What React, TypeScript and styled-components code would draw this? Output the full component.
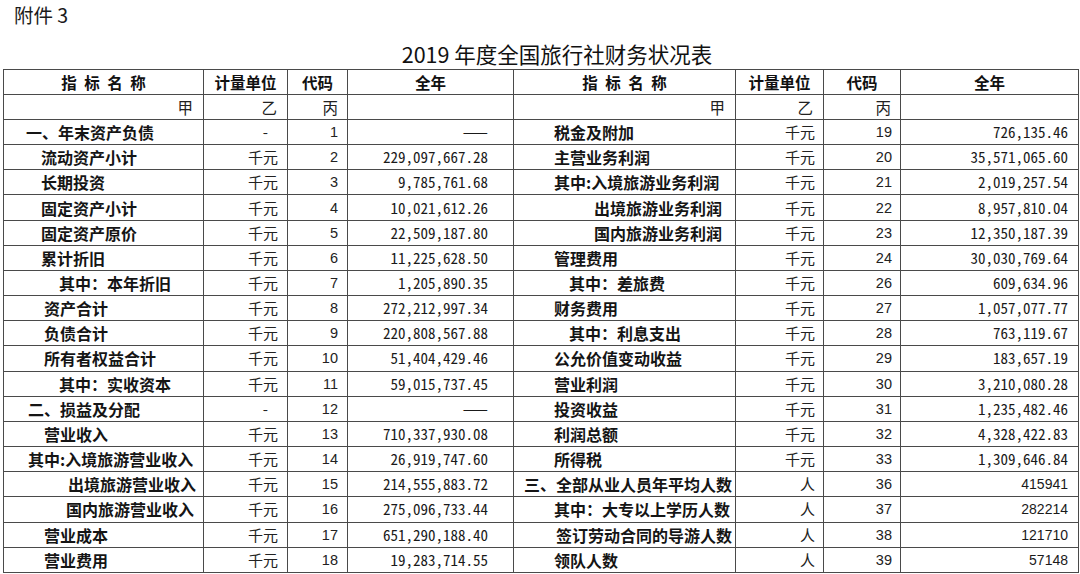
import React from "react";
import styled, { createGlobalStyle } from "styled-components";

const Global = createGlobalStyle`
  html, body { margin: 0; padding: 0; background: #fff; }
  body { font-family: "Noto Sans CJK SC", "Noto Sans", sans-serif; color: #111; }
`;

const Page = styled.div`
  width: 1080px;
  height: 574px;
  overflow: hidden;
  background: #fff;
`;

const Note = styled.div`
  height: 30px;
  line-height: 30px;
  padding-left: 14px;
  font-size: 19.5px;
  font-weight: 400;
  color: #1a1a1a;
`;

const Title = styled.div`
  height: 30px;
  line-height: 30px;
  padding-top: 9px;
  padding-left: 34px;
  text-align: center;
  font-size: 21.5px;
  font-weight: 400;
  color: #111;
`;

const Table = styled.table`
  margin-left: 3px;
  width: 1075px;
  border-collapse: collapse;
  table-layout: fixed;
`;

const Row = styled.tr<{ $h: number }>`
  height: ${(p) => p.$h}px;
`;

const Cell = styled.td<{ $align?: string; $pl?: number; $pr?: number }>`
  border: 1px solid #4a4a4a;
  padding: 0 ${(p) => p.$pr ?? 0}px 0 ${(p) => p.$pl ?? 0}px;
  text-align: ${(p) => p.$align ?? "left"};
  white-space: nowrap;
  overflow: hidden;
  line-height: 20px;
  vertical-align: middle;
`;

const HeadCell = styled(Cell)`
  text-align: center;
  font-size: 15.5px;
  font-weight: 700;
  color: #111;
`;

const Spaced = styled.span`
  word-spacing: 4px;
`;

const MarkCell = styled(Cell)`
  text-align: right;
  font-size: 15.5px;
  font-weight: 400;
  color: #222;
`;

const LabelCell = styled(Cell)`
  font-size: 16px;
  font-weight: 700;
  color: #151515;
`;

const UnitCell = styled(Cell)`
  text-align: right;
  font-size: 15px;
  font-weight: 400;
  color: #222;
`;

const CodeCell = styled(Cell)`
  text-align: right;
  font-family: "Liberation Sans", Arial, sans-serif;
  font-size: 14.5px;
  color: #222;
`;

const NumCell = styled(Cell)`
  text-align: right;
  font-size: 15px;
  font-feature-settings: "hwid" 1;
  color: #1a1a1a;
`;

const CountCell = styled(Cell)`
  text-align: right;
  font-family: "Liberation Sans", Arial, sans-serif;
  font-size: 14px;
  color: #1a1a1a;
`;

type Item = { label: string; indent: number; unit: string; code: string; value: string; count?: boolean };

const left: Item[] = [
  { label: "一、年末资产负债", indent: 22, unit: "-", code: "1", value: "——" },
  { label: "流动资产小计", indent: 37, unit: "千元", code: "2", value: "229,097,667.28" },
  { label: "长期投资", indent: 37, unit: "千元", code: "3", value: "9,785,761.68" },
  { label: "固定资产小计", indent: 37, unit: "千元", code: "4", value: "10,021,612.26" },
  { label: "固定资产原价", indent: 37, unit: "千元", code: "5", value: "22,509,187.80" },
  { label: "累计折旧", indent: 37, unit: "千元", code: "6", value: "11,225,628.50" },
  { label: "其中：本年折旧", indent: 55, unit: "千元", code: "7", value: "1,205,890.35" },
  { label: "资产合计", indent: 40, unit: "千元", code: "8", value: "272,212,997.34" },
  { label: "负债合计", indent: 40, unit: "千元", code: "9", value: "220,808,567.88" },
  { label: "所有者权益合计", indent: 40, unit: "千元", code: "10", value: "51,404,429.46" },
  { label: "其中：实收资本", indent: 55, unit: "千元", code: "11", value: "59,015,737.45" },
  { label: "二、损益及分配", indent: 24, unit: "-", code: "12", value: "——" },
  { label: "营业收入", indent: 40, unit: "千元", code: "13", value: "710,337,930.08" },
  { label: "其中:入境旅游营业收入", indent: 24, unit: "千元", code: "14", value: "26,919,747.60" },
  { label: "出境旅游营业收入", indent: 64, unit: "千元", code: "15", value: "214,555,883.72" },
  { label: "国内旅游营业收入", indent: 62, unit: "千元", code: "16", value: "275,096,733.44" },
  { label: "营业成本", indent: 40, unit: "千元", code: "17", value: "651,290,188.40" },
  { label: "营业费用", indent: 40, unit: "千元", code: "18", value: "19,283,714.55" },
];

const right: Item[] = [
  { label: "税金及附加", indent: 40, unit: "千元", code: "19", value: "726,135.46" },
  { label: "主营业务利润", indent: 40, unit: "千元", code: "20", value: "35,571,065.60" },
  { label: "其中:入境旅游业务利润", indent: 40, unit: "千元", code: "21", value: "2,019,257.54" },
  { label: "出境旅游业务利润", indent: 80, unit: "千元", code: "22", value: "8,957,810.04" },
  { label: "国内旅游业务利润", indent: 80, unit: "千元", code: "23", value: "12,350,187.39" },
  { label: "管理费用", indent: 40, unit: "千元", code: "24", value: "30,030,769.64" },
  { label: "其中：差旅费", indent: 55, unit: "千元", code: "26", value: "609,634.96" },
  { label: "财务费用", indent: 40, unit: "千元", code: "27", value: "1,057,077.77" },
  { label: "其中：利息支出", indent: 55, unit: "千元", code: "28", value: "763,119.67" },
  { label: "公允价值变动收益", indent: 40, unit: "千元", code: "29", value: "183,657.19" },
  { label: "营业利润", indent: 40, unit: "千元", code: "30", value: "3,210,080.28" },
  { label: "投资收益", indent: 40, unit: "千元", code: "31", value: "1,235,482.46" },
  { label: "利润总额", indent: 40, unit: "千元", code: "32", value: "4,328,422.83" },
  { label: "所得税", indent: 40, unit: "千元", code: "33", value: "1,309,646.84" },
  { label: "三、全部从业人员年平均人数", indent: 10, unit: "人", code: "36", value: "415941", count: true },
  { label: "其中：大专以上学历人数", indent: 40, unit: "人", code: "37", value: "282214", count: true },
  { label: "签订劳动合同的导游人数", indent: 42, unit: "人", code: "38", value: "121710", count: true },
  { label: "领队人数", indent: 40, unit: "人", code: "39", value: "57148", count: true },
];

const widths = [200, 84, 60, 166, 222, 88, 77, 178];

function Half({ item, side }: { item: Item; side: "l" | "r" }) {
  const numPad = side === "l" ? 25 : 10;
  const unitPad = item.unit === "-" ? 19 : side === "l" ? 9 : 8;
  return (
    <>
      <LabelCell $pl={item.indent}>{item.label}</LabelCell>
      <UnitCell $pr={unitPad}>{item.unit}</UnitCell>
      <CodeCell $pr={side === "l" ? 9 : 8}>{item.code}</CodeCell>
      {item.count ? (
        <CountCell $pr={numPad}>{item.value}</CountCell>
      ) : (
        <NumCell $pr={numPad}>{item.value}</NumCell>
      )}
    </>
  );
}

export default function App() {
  return (
    <Page>
      <Global />
      <Note>附件 3</Note>
      <Title>2019 年度全国旅行社财务状况表</Title>
      <Table>
        <colgroup>
          {widths.map((w, i) => (
            <col key={i} style={{ width: w }} />
          ))}
        </colgroup>
        <tbody>
          <Row $h={25}>
            <HeadCell><Spaced>指 标 名 称</Spaced></HeadCell>
            <HeadCell>计量单位</HeadCell>
            <HeadCell>代码</HeadCell>
            <HeadCell>全年</HeadCell>
            <HeadCell><Spaced>指 标 名 称</Spaced></HeadCell>
            <HeadCell>计量单位</HeadCell>
            <HeadCell>代码</HeadCell>
            <HeadCell>全年</HeadCell>
          </Row>
          <Row $h={25}>
            <MarkCell $pr={10}>甲</MarkCell>
            <MarkCell $pr={10}>乙</MarkCell>
            <MarkCell $pr={9}>丙</MarkCell>
            <MarkCell />
            <MarkCell $pr={10}>甲</MarkCell>
            <MarkCell $pr={10}>乙</MarkCell>
            <MarkCell $pr={9}>丙</MarkCell>
            <MarkCell />
          </Row>
          {left.map((l, i) => (
            <Row $h={25.17} key={i}>
              <Half item={l} side="l" />
              <Half item={right[i]} side="r" />
            </Row>
          ))}
        </tbody>
      </Table>
    </Page>
  );
}
